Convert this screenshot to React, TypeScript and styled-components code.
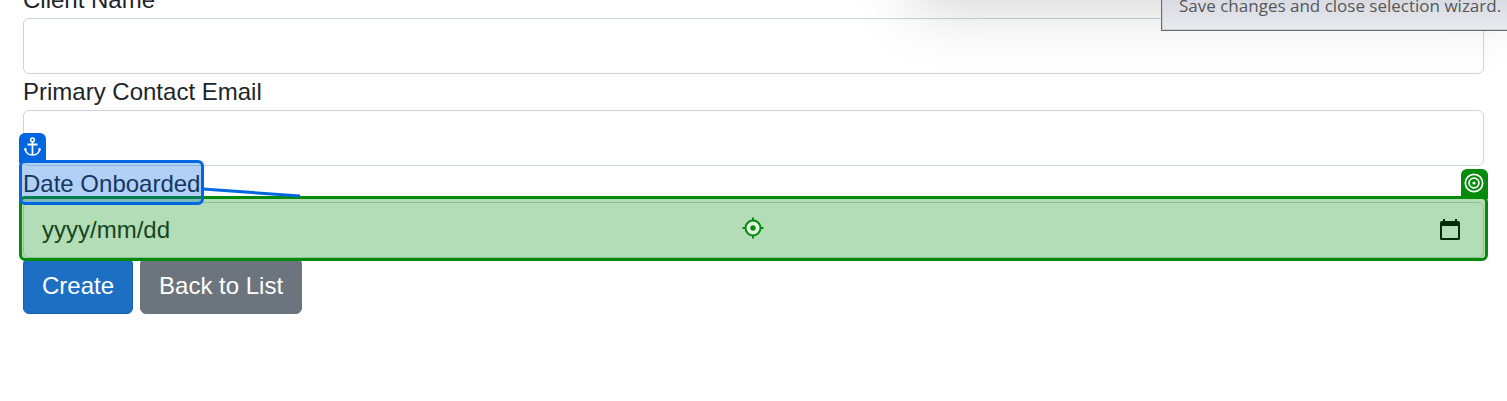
import React from "react";
import styled, { createGlobalStyle } from "styled-components";

const BLUE = "#0067e0";
const GREEN = "#048b0c";

const GlobalStyle = createGlobalStyle`
  *, *::before, *::after { box-sizing: border-box; }
  html, body { margin: 0; background: #fff; }
  body, input, button {
    font-family: "Liberation Sans", Arial, sans-serif;
    font-size: 24px;
    line-height: 36px;
    color: #212529;
  }
`;

const Page = styled.main`
  position: relative;
  min-height: 100vh;
  overflow: hidden;
`;

/* The page is scrolled a little past the first label. */
const Form = styled.form`
  display: flex;
  flex-direction: column;
  margin-top: -18px;
  padding: 0 23px;
`;

const Field = styled.div`
  display: flex;
  flex-direction: column;
  align-items: flex-start;
`;

const Label = styled.label`
  display: block;
`;

const Control = styled.div`
  position: relative;
  display: flex;
  align-items: center;
  width: 100%;
`;

const Input = styled.input`
  width: 100%;
  height: 56px;
  padding: 9px 18px;
  border: 1px solid #ced4da;
  border-radius: 6px;
  background: #fff;
  outline: none;
  &::placeholder { color: #212529; opacity: 1; }
`;

const PickerButton = styled.button`
  position: absolute;
  right: 23px;
  display: flex;
  padding: 0;
  border: 0;
  background: none;
  color: #000;
`;

const Anchored = styled.div`
  position: relative;
`;

const Highlight = styled.div<{ $color: string; $fill: string; $level: number }>`
  position: absolute;
  inset: -6px -4px -3px;
  z-index: ${(p) => p.$level};
  display: flex;
  align-items: center;
  justify-content: center;
  border: 3px solid ${(p) => p.$color};
  border-radius: 6px;
  background: ${(p) => p.$fill};
  pointer-events: none;
`;

const Tab = styled.span<{ $color: string; $side: "left" | "right" }>`
  position: absolute;
  bottom: 100%;
  ${(p) => p.$side}: -3px;
  display: flex;
  align-items: center;
  justify-content: center;
  width: 27px;
  height: 30px;
  padding-bottom: 3px;
  border-radius: 6px 6px 0 0;
  background: ${(p) => p.$color};
`;

const Connector = styled.svg`
  position: absolute;
  left: 100%;
  top: 20px;
  z-index: 3;
  margin-left: 3px;
`;

const Actions = styled.div`
  display: flex;
  gap: 7px;
`;

const Button = styled.button<{ $bg: string; $edge: string }>`
  height: 56px;
  padding: 9px 18px;
  border: 1px solid ${(p) => p.$edge};
  border-radius: 6px;
  background: ${(p) => p.$bg};
  color: #fff;
`;

const WindowShadow = styled.div`
  position: absolute;
  bottom: 100%;
  left: 914px;
  right: -10px;
  z-index: 4;
  height: 200px;
  box-shadow: 0 7px 60px rgba(0, 0, 0, 0.18);
  pointer-events: none;
`;

const Tooltip = styled.div`
  position: absolute;
  top: -12px;
  right: -12px;
  z-index: 5;
  width: 358px;
  height: 43px;
  padding: 0 17px;
  border: 1px solid #6c6c6e;
  box-shadow: inset 0 0 0 1px #cfd0d4;
  background: linear-gradient(#d3d5de, #e9eaef);
  color: #575757;
  font-family: "Segoe UI", "Open Sans", sans-serif;
  font-size: 17px;
  line-height: 34px;
  white-space: nowrap;
`;

const AnchorIcon = () => (
  <svg width="18" height="20" viewBox="0 0 18 20" fill="none" stroke="#fff" strokeWidth="1.5" aria-hidden="true">
    <circle cx="8.500" cy="2.800" r="1.900" />
    <path d="M8.500 4.700v13.300M3.500 7.500h10" strokeWidth="1.800" />
    <path d="M1.200 11.500c.5 4 3.300 6.500 7.300 6.500s6.800-2.500 7.300-6.500" />
    <path d="M.4 13.500l.8-2.300 1.800 1.300M16.600 13.500l-.8-2.300-1.800 1.300" strokeWidth="1" />
  </svg>
);

const TargetIcon = () => (
  <svg width="21" height="20" viewBox="0 0 21 20" fill="none" stroke="#fff" strokeWidth="1.700" aria-hidden="true">
    <circle cx="10" cy="10" r="8.700" />
    <circle cx="10" cy="10" r="4.900" />
    <circle cx="10" cy="10" r="1.600" fill="#fff" stroke="none" />
  </svg>
);

const CrosshairIcon = () => (
  <svg width="23" height="23" viewBox="0 0 23 23" fill="none" stroke={GREEN} strokeWidth="2" aria-hidden="true">
    <circle cx="11" cy="11" r="7.500" fill="#e4f3e4" />
    <circle cx="11" cy="11" r="2.700" fill={GREEN} stroke="none" />
    <path d="M11 .5v3M11 18.500v3M.5 11h3M18.500 11h3" />
  </svg>
);

const CalendarIcon = () => (
  <svg width="22" height="22" viewBox="0 0 22 22" fill="currentColor" aria-hidden="true">
    <path
      fillRule="evenodd"
      d="M4 0h2v2h10V0h2v2h1a2 2 0 0 1 2 2v15.500a1.500 1.500 0 0 1-1.500 1.500h-17A1.500 1.500 0 0 1 1 19.500V4a2 2 0 0 1 2-2h1zM3 7v12h16V7z"
    />
  </svg>
);

export default function App() {
  return (
    <Page>
      <GlobalStyle />
      <Form onSubmit={(e: React.FormEvent) => e.preventDefault()}>
        <Field>
          <Label htmlFor="client-name">Client Name</Label>
          <Control>
            <Input id="client-name" type="text" />
          </Control>
        </Field>
        <Field>
          <Label htmlFor="contact-email">Primary Contact Email</Label>
          <Control>
            <Input id="contact-email" type="email" />
          </Control>
        </Field>
        <Field>
          <Anchored>
            <Label htmlFor="date-onboarded">Date Onboarded</Label>
            <Highlight $color={BLUE} $fill="rgba(0, 98, 222, 0.3)" $level={2}>
              <Tab $color={BLUE} $side="left">
                <AnchorIcon />
              </Tab>
            </Highlight>
            <Connector width="98" height="12" viewBox="0 0 98 12" aria-hidden="true">
              <path d="M0 3L97 10" stroke={BLUE} strokeWidth="3" />
            </Connector>
          </Anchored>
          <Control>
            <Input id="date-onboarded" type="text" placeholder="yyyy/mm/dd" />
            <PickerButton type="button" aria-label="Open calendar">
              <CalendarIcon />
            </PickerButton>
            <Highlight $color={GREEN} $fill="rgba(4, 143, 12, 0.3)" $level={1}>
              <Tab $color={GREEN} $side="right">
                <TargetIcon />
              </Tab>
              <CrosshairIcon />
            </Highlight>
          </Control>
        </Field>
        <Actions>
          <Button type="submit" $bg="#1d6fc4" $edge="#1861ac">Create</Button>
          <Button type="button" $bg="#6c757d" $edge="#6c757d">Back to List</Button>
        </Actions>
      </Form>
      <WindowShadow />
      <Tooltip role="tooltip">Save changes and close selection wizard.</Tooltip>
    </Page>
  );
}
